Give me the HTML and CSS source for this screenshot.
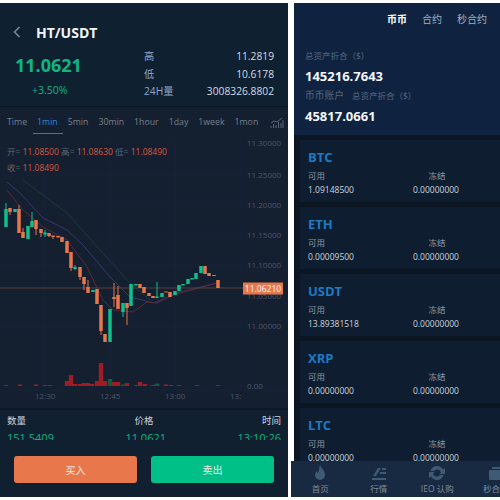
FILE: index.html
```html
<!DOCTYPE html>
<html lang="en">
<head>
    <meta charset="UTF-8">
    <title>HT/USDT</title>
    <link rel="stylesheet" href="styles.css">
</head>
<body>
    <div class="page">
        <section class="trade">
            <header class="market">
                <div class="market-title">
                    <svg class="back" width="8" height="12" viewBox="0 0 8 12"><path d="M6.5 1 1.5 6l5 5"/></svg>
                    <h1>HT/USDT</h1>
                </div>
                <div class="market-body">
                    <div class="market-price">
                        <div class="last">11.0621</div>
                        <div class="change">+3.50%</div>
                    </div>
                    <dl class="market-stats">
                        <div><dt>高</dt><dd>11.2819</dd></div>
                        <div><dt>低</dt><dd>10.6178</dd></div>
                        <div><dt>24H量</dt><dd>3008326.8802</dd></div>
                    </dl>
                </div>
            </header>

            <nav class="periods">
                <span>Time</span>
                <span class="active">1min</span>
                <span>5min</span>
                <span>30min</span>
                <span>1hour</span>
                <span>1day</span>
                <span>1week</span>
                <span>1mon</span>
                <svg class="depth" width="14" height="12" viewBox="0 0 14 12"><path d="M1 11V9M3.5 11V7M6 11V8M8.500 11V5M11 11V6M13 11V3M1 6l3-2 3 1 5-4"/></svg>
            </nav>

            <div class="chart">
                <div class="ohlc">
                    <div><i>开=</i> 11.08500 <i>高=</i> 11.08630 <i>低=</i> 11.08490</div>
                    <div><i>收=</i> 11.08490</div>
                </div>
                <svg class="plot" width="288" height="272" viewBox="0 138 288 272">
                    <path class="grid" d="M0 175H242M0 205H242M0 235H242M0 265H242M0 326H242M0 390H288M45 138V390M110 138V390M175 138V390M240 138V390"/>
                    <path class="ma ma-green" d="M23 180 67 213 100 250 130 283 150 300"/>
                    <path class="ma ma-purple" d="M7 182 20 193 43 218 67 230 83 245 110 277 130 297 150 302 157 303 177 293 217 283"/>
                    <path class="ma ma-red" d="M7 190 23 210 43 227 67 240 87 267 103 300 113 310 133 312 147 302 153 303 173 295 217 283"/>
                    <path class="price-line" d="M0 288H243"/>

                    <path class="wick up" d="M6 203V227M32 212V221M45 230V237M75 265V270M123 312V317M157 282V298"/>
                    <path class="body up" d="M6 209V227M15 209V212M28 226V239M32 221V227M45 232.500V234.500M75 267V269M93 290V292M110 309V342M123 303V312M131 284V306M136 284V285.500M157 296.500V298M162 293V297M175 291V295M179 285V291M183 284V285.500M188 279V284M192 278V279.500M196 273V279M201 266V273"/>
                    <path class="wick down" d="M10 212V215M19 205V209M23 228V232M36 229V235M41 233V237M49 236V237M53 237V239M71 268V271M80 277V280M84 284V290M88 280V287M101 331V335M114 283V307M118 286V295M127 308V325"/>
                    <path class="body down" d="M10 208V212M19 209V233M23 232V238M36 220V229M41 229V233M49 233V236M53 235.500V237M58 236V237.500M62 237V242M67 241V253M71 252V268M80 267V277M84 277V284M88 287V293M97 289V304M101 305V331M105 334V342M114 297V299M118 295V309M127 303V308M140 284V288M144 287V293M149 293V296M153 296V298M166 291.500V292.500M170 292V297M205 266V274M209 273V276M214 275V276M218 280V288"/>

                    <path class="vol vol-down" d="M20 386V384.500M36 386V384.500M50 386V385M71 386V375M67 386V381M75 386V384M80 386V384M84 386V383M88 386V383M92 386V384M97 386V381M101 386V363M105 386V381M114 386V382M118 386V382M127 386V383M140 386V382M145 386V384M153 386V385M166 386V384.500M171 386V385M218 386V385"/>
                    <path class="vol vol-up" d="M6 386V385M45 386V385M110 386V379M123 386V384.500M136 386V385M157 386V383.500M179 386V385M197 386V385"/>

                    <g class="axis">
                        <text x="247" y="146">11.30000</text>
                        <text x="247" y="178">11.25000</text>
                        <text x="247" y="208">11.20000</text>
                        <text x="247" y="238">11.15000</text>
                        <text x="247" y="268">11.10000</text>
                        <text x="247" y="299">11.05000</text>
                        <text x="247" y="329">11.00000</text>
                        <text x="247" y="389">0.00</text>
                        <text x="35" y="399">12:30</text>
                        <text x="100" y="399">12:45</text>
                        <text x="165" y="399">13:00</text>
                        <text x="230" y="399">13:</text>
                    </g>
                    <rect class="price-tag" x="243" y="282.500" width="40" height="12"/>
                    <text class="price-tag-text" x="263" y="292">11.06210</text>
                </svg>
            </div>

            <div class="trades">
                <div class="trades-head">
                    <span>数量</span><span>价格</span><span>时间</span>
                </div>
                <div class="trades-rows">
                    <div class="trades-row">
                        <span>151.5409</span><span>11.0621</span><span>13:10:26</span>
                    </div>
                </div>
            </div>

            <div class="actions">
                <button class="btn btn-buy">买入</button>
                <button class="btn btn-sell">卖出</button>
            </div>
        </section>

        <section class="wallet">
            <div class="summary">
                <nav class="wallet-tabs">
                    <span class="active">币币</span>
                    <span>合约</span>
                    <span>秒合约</span>
                </nav>
                <p class="summary-label">总资产折合（$）</p>
                <p class="summary-value">145216.7643</p>
                <p class="summary-label"><span class="summary-account">币币账户</span>总资产折合（$）</p>
                <p class="summary-value">45817.0661</p>
            </div>

            <div class="coins">
                <article class="coin">
                    <h3>BTC</h3>
                    <div class="coin-grid">
                        <span class="coin-key">可用</span><span class="coin-key">冻结</span>
                        <span>1.09148500</span><span>0.00000000</span>
                    </div>
                </article>
                <article class="coin">
                    <h3>ETH</h3>
                    <div class="coin-grid">
                        <span class="coin-key">可用</span><span class="coin-key">冻结</span>
                        <span>0.00009500</span><span>0.00000000</span>
                    </div>
                </article>
                <article class="coin">
                    <h3>USDT</h3>
                    <div class="coin-grid">
                        <span class="coin-key">可用</span><span class="coin-key">冻结</span>
                        <span>13.89381518</span><span>0.00000000</span>
                    </div>
                </article>
                <article class="coin">
                    <h3>XRP</h3>
                    <div class="coin-grid">
                        <span class="coin-key">可用</span><span class="coin-key">冻结</span>
                        <span>0.00000000</span><span>0.00000000</span>
                    </div>
                </article>
                <article class="coin">
                    <h3>LTC</h3>
                    <div class="coin-grid">
                        <span class="coin-key">可用</span><span class="coin-key">冻结</span>
                        <span>0.00000000</span><span>0.00000000</span>
                    </div>
                </article>
            </div>

            <nav class="tabbar">
                <a>
                    <svg viewBox="0 0 16 16"><path d="M8 0c1 3 5 5 5 10a5 5 0 0 1-10 0c0-2 1-3 2-4 0 1 .5 2 1 2 1-2 1-5 2-8z"/></svg>
                    <span>首页</span>
                </a>
                <a>
                    <svg viewBox="0 0 16 16"><path d="M1 13h14v2H1zM2 11 7 3h3l-5 8zM9 7h6v2H9zM11 3h4v2h-4z"/></svg>
                    <span>行情</span>
                </a>
                <a>
                    <svg viewBox="0 0 16 16"><path d="M8 1a7 7 0 0 1 6 3.500L16 3v6h-6l2-1.500A4 4 0 0 0 5 6H1.500A7 7 0 0 1 8 1zM8 15a7 7 0 0 1-6-3.500L0 13V7h6L4 8.500A4 4 0 0 0 11 10h3.500A7 7 0 0 1 8 15z"/></svg>
                    <span>IEO 认购</span>
                </a>
                <a>
                    <svg viewBox="0 0 16 16"><path d="M2 5h12a1 1 0 0 1 1 1v8a1 1 0 0 1-1 1H2a1 1 0 0 1-1-1V6a1 1 0 0 1 1-1zM4 2h8v2H4z"/></svg>
                    <span>秒合约</span>
                </a>
            </nav>
        </section>
    </div>
</body>
</html>
```

FILE: styles.css
```css
:root {
    --green: #0fb583;
    --orange: #e8774c;
    --muted: #8493a8;
    --blue: #1f79c4;
}
* {
    box-sizing: border-box;
}
body {
    margin: 0;
    background: #ffffff;
    font-family: "Open Sans", "Noto Sans CJK SC", sans-serif;
    color: #dfe6ee;
}
h1, h3, p, dl, dd {
    margin: 0;
}
.page {
    display: flex;
    gap: 6px;
    width: 500px;
    height: 500px;
    padding-top: 3px;
    padding-bottom: 3px;
    overflow: hidden;
}

/* left phone: trading */
.trade {
    width: 288px;
    flex: none;
    display: flex;
    flex-direction: column;
    background: #102030;
}
.market {
    height: 104px;
    flex: none;
    padding: 19px 14px 0 13px;
    background: #0f2031;
    border-bottom: 1px solid #0c1825;
}
.market-title {
    display: flex;
    align-items: center;
    gap: 15px;
    height: 20px;
}
.back {
    fill: none;
    stroke: #7f8a96;
    stroke-width: 1.500;
}
h1 {
    font-size: 14px;
    font-weight: 700;
    color: #f2f5f8;
}
.market-body {
    display: flex;
    margin-top: 6px;
}
.market-price {
    width: 131px;
    flex: none;
    padding-left: 2px;
}
.last {
    font-size: 18px;
    font-weight: 700;
    line-height: 30px;
    margin-top: 2px;
    color: var(--green);
}
.change {
    font-size: 10.500px;
    line-height: 14px;
    margin-top: 3px;
    padding-left: 17px;
    color: var(--green);
}
.market-stats {
    flex: 1;
}
.market-stats div {
    display: flex;
    justify-content: space-between;
    height: 17.500px;
    line-height: 17.500px;
    font-size: 10.250px;
}
.market-stats dt {
    color: #8fa6c8;
}
.market-stats dd {
    color: #d5dce4;
}

.periods {
    height: 31px;
    flex: none;
    display: flex;
    align-items: center;
    gap: 10px;
    padding-left: 7px;
    font-size: 8.750px;
    color: #75818f;
    background: #141f30;
}
.periods span {
    line-height: 31px;
    position: relative;
}
.periods .active {
    color: #2a8ad4;
}
.periods .active::after {
    content: "";
    position: absolute;
    left: -4px;
    right: -5px;
    bottom: 4px;
    height: 1px;
    background: #2a7fc0;
}
.depth {
    margin-left: 2px;
    fill: none;
    stroke: #59667a;
    stroke-width: 1;
}

.chart {
    position: relative;
    height: 272px;
    flex: none;
    background: #141f30;
    border-bottom: 2px solid #0d1824;
}
.plot {
    display: block;
}
.ohlc {
    position: absolute;
    left: 7px;
    top: 6px;
    font-size: 8.500px;
    line-height: 15.500px;
    color: #d9593f;
}
.ohlc i {
    font-style: normal;
    color: #5d6878;
}
.grid {
    stroke: #17233a;
    stroke-width: 1;
    fill: none;
}
.ma {
    fill: none;
    stroke-width: 1;
}
.ma-green {
    stroke: #1b3a3c;
}
.ma-purple {
    stroke: #3c3570;
}
.ma-red {
    stroke: #5a2a3a;
}
.price-line {
    stroke: #5a3f3f;
    stroke-width: 1;
}
.wick, .body {
    fill: none;
}
.wick {
    stroke-width: 1;
}
.body {
    stroke-width: 3.500;
}
.up {
    stroke: #0fbf8c;
}
.down {
    stroke: #e8774c;
}
.vol {
    fill: none;
    stroke-width: 4.400;
}
.vol-down {
    stroke: #a01c24;
}
.vol-up {
    stroke: #145a3c;
}
.axis text {
    font-size: 8px;
    fill: #4d5868;
}
.price-tag {
    fill: var(--orange);
}
.price-tag-text {
    font-size: 8.500px;
    fill: #ffffff;
    text-anchor: middle;
}

.trades {
    flex: none;
    height: 30px;
    padding: 0 7px;
    background: #102030;
}
.trades-head, .trades-row {
    display: flex;
    justify-content: space-between;
}
.trades-head {
    height: 19px;
    padding-top: 3px;
    font-size: 9.500px;
    line-height: 16px;
    color: #cdd5de;
}
.trades-rows {
    height: 11px;
    overflow: hidden;
}
.trades-row {
    font-size: 11px;
    line-height: 14px;
    padding-top: 2px;
    color: var(--green);
}
.actions {
    flex: 1;
    display: flex;
    gap: 14px;
    padding: 16px 14px 12px;
    background: #102030;
}
.btn {
    width: 123px;
    height: 27px;
    border: none;
    border-radius: 3px;
    padding: 0;
    font-family: inherit;
    font-size: 10px;
    color: #f4e8e0;
}
.btn-buy {
    background: var(--orange);
}
.btn-sell {
    background: #00c087;
}

/* right phone: wallet */
.wallet {
    flex: 1;
    display: flex;
    flex-direction: column;
    min-width: 0;
    background: #0b1622;
}
.summary {
    height: 132px;
    flex: none;
    padding-left: 11px;
    background: #0f2340;
}
.wallet-tabs {
    display: flex;
    gap: 15px;
    padding: 8px 0 0 82px;
    font-size: 10px;
    line-height: 16px;
    color: #9fb2c9;
}
.wallet-tabs .active {
    color: #ffffff;
    font-weight: 700;
}
.summary-label {
    font-size: 8.500px;
    line-height: 12px;
    color: #56687f;
}
.summary-account {
    font-size: 9.750px;
    margin-right: 8px;
}
.wallet-tabs + .summary-label {
    margin-top: 23px;
}
.summary-value {
    font-size: 13px;
    font-weight: 700;
    line-height: 18px;
    margin-top: 5px;
    margin-bottom: 5px;
    color: #f4f6f9;
}
.coins {
    flex: 1;
    min-height: 0;
    overflow: hidden;
    padding: 5px 0 0 6px;
}
.coin {
    height: 62px;
    margin-bottom: 5px;
    padding: 5px 0 0 8px;
    background: #0e1e30;
}
.coin h3 {
    font-size: 13px;
    font-weight: 700;
    line-height: 24px;
    color: var(--blue);
}
.coin-grid {
    display: grid;
    grid-template-columns: 105px 48px;
    justify-items: start;
    font-size: 8.500px;
    line-height: 14px;
    color: #cdd5de;
}
.coin-key {
    color: #8a98a8;
}
.coin-key:nth-child(2) {
    justify-self: center;
}
.tabbar {
    height: 36px;
    flex: none;
    display: flex;
    width: 234px;
    margin-left: -3px;
    background: #182a41;
}
.tabbar a {
    flex: 1;
    display: flex;
    flex-direction: column;
    align-items: center;
    padding-top: 4px;
    font-size: 8.500px;
    line-height: 12px;
    color: #7d8b9b;
}
.tabbar svg {
    width: 16px;
    height: 16px;
    margin-bottom: 2px;
    fill: #3f5a75;
}
```
